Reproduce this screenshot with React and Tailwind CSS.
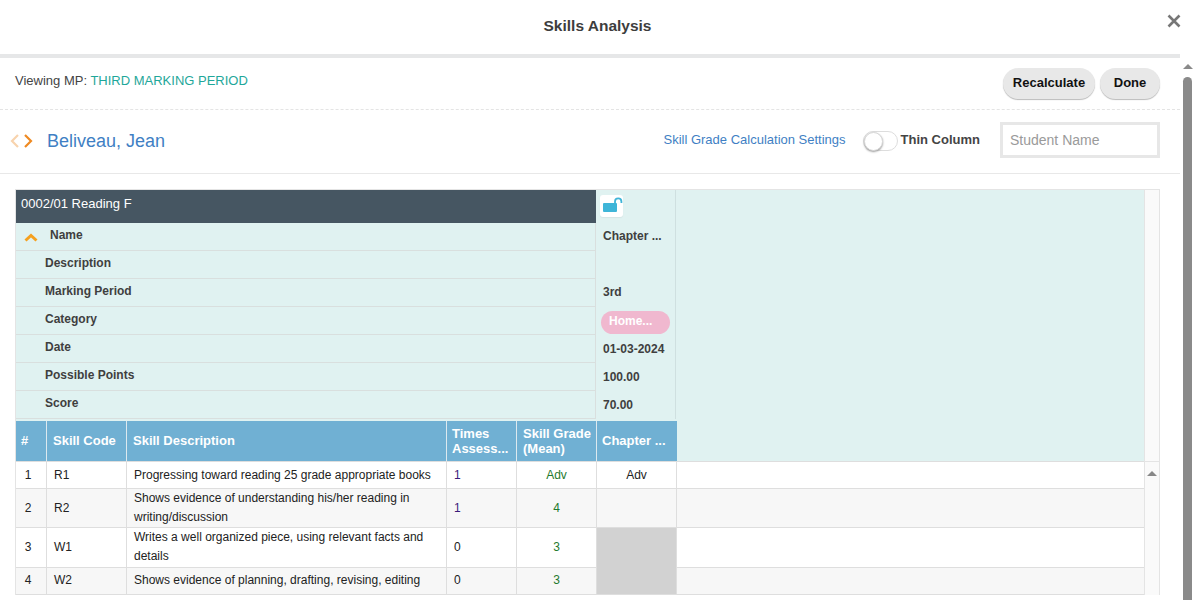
import React from 'react';

const metaRows = [
  { label: 'Name', value: 'Chapter ...', first: true, top: 'pt-[5px]' },
  { label: 'Description', value: '', top: 'pt-[5px]' },
  { label: 'Marking Period', value: '3rd', top: 'pt-[5px]' },
  { label: 'Category', pill: 'Home...', top: 'pt-[4px]' },
  { label: 'Date', value: '01-03-2024', top: 'pt-[6px]' },
  { label: 'Possible Points', value: '100.00', top: 'pt-[6px]' },
  { label: 'Score', value: '70.00', top: 'pt-[6px]' },
];

const skills = [
  { n: 1, code: 'R1', desc: 'Progressing toward reading 25 grade appropriate books', times: '1', grade: 'Adv', chapter: 'Adv', h: 'h-[27px]' },
  { n: 2, code: 'R2', desc: 'Shows evidence of understanding his/her reading in writing/discussion', times: '1', grade: '4', h: 'h-[39px]', alt: true },
  { n: 3, code: 'W1', desc: 'Writes a well organized piece, using relevant facts and details', times: '0', grade: '3', off: true, h: 'h-[40px]' },
  { n: 4, code: 'W2', desc: 'Shows evidence of planning, drafting, revising, editing', times: '0', grade: '3', off: true, h: 'h-[27px]', alt: true },
];

const gridCols = 'grid grid-cols-[31px_80px_320px_70px_80px_80px_467px]';

function Chevron({ points, color, className }) {
  return (
    <svg viewBox="0 0 12 16" className={className}>
      <polyline points={points} fill="none" stroke={color} strokeWidth="2.2" />
    </svg>
  );
}

function MetaRow({ row }) {
  return (
    <div className="h-[28px] flex">
      <div className="w-[580px] border-b border-r border-[#d9dfde] flex items-start pt-[4px] text-xs font-bold text-[#3f3f3f]">
        {row.first ? (
          <div className="flex items-center pl-[8px]">
            <svg viewBox="0 0 14 9" className="w-[14px] h-[9px] mt-[4px]">
              <polyline points="1.5,7.5 7,2.5 12.5,7.5" fill="none" stroke="#f5a01e" strokeWidth="3" />
            </svg>
            <span className="ml-[12px]">{row.label}</span>
          </div>
        ) : (
          <span className="pl-[29px]">{row.label}</span>
        )}
      </div>
      <div className={`w-[80px] border-r border-[#cfe0e0] text-xs font-bold text-[#3f3f3f] pl-[7px] ${row.top} whitespace-nowrap`}>
        {row.pill ? (
          <div className="ml-[-2px] w-[69px] h-[23px] rounded-full bg-[#f0b8cf] text-white pl-[8px] leading-[21px]">{row.pill}</div>
        ) : (
          row.value
        )}
      </div>
    </div>
  );
}

function SkillRow({ s }) {
  const bg = s.alt ? 'bg-[#f7f7f7]' : 'bg-white';
  const cell = 'border-r border-[#dedede] flex items-center';
  const lift = s.n > 2 ? 'pb-[2px]' : '';
  return (
    <div className={`${gridCols} ${s.h} ${bg} border-b border-[#dedede] text-xs text-[#222]`}>
      <div className={`${cell} ${lift} justify-center pr-[6px]`}>{s.n}</div>
      <div className={`${cell} ${lift} pl-[7px]`}>{s.code}</div>
      <div className={`${cell} ${lift} pl-[7px] pr-[8px] leading-[19px]`}>{s.desc}</div>
      <div className={`${cell} ${lift} pl-[7px] ${s.times === '1' ? 'text-[#3b1c7a]' : ''}`}>{s.times}</div>
      <div className={`${cell} ${lift} justify-center text-[#1f7a2e]`}>{s.grade}</div>
      <div className={`${cell} justify-center ${s.off ? 'bg-[#d2d2d2]' : ''}`}>{s.chapter}</div>
      <div />
    </div>
  );
}

export default function App() {
  return (
    <div className="relative w-[1195px] h-[600px] overflow-hidden bg-white font-['Liberation_Sans',Arial,sans-serif]">
      {/* Title */}
      <div className="h-[54px] flex items-center justify-center text-[15.5px] font-bold text-[#3d3d3d] pb-[3px]">Skills Analysis</div>
      <svg viewBox="0 0 14 14" className="absolute top-[14px] left-[1167px] w-[14px] h-[14px]">
        <path d="M1.5 1.5 L12.5 12.5 M12.5 1.5 L1.5 12.5" stroke="#777" strokeWidth="2.6" />
      </svg>

      <div className="flex">
        <div className="w-[1180px] border-t-4 border-[#e6e7e8]">
          {/* Marking period row */}
          <div className="h-[52px] border-b border-dashed border-[#e4e4e4] flex justify-between pl-[15px] pr-[20px]">
            <div className="text-[13px] pt-[15px] leading-[16px] text-[#444]">
              Viewing MP: <span className="text-[#1fa79a]">THIRD MARKING PERIOD</span>
            </div>
            <div className="flex gap-[5px] pt-[10px] text-[13px] font-bold text-[#111]">
              <button className="w-[92px] h-[31px] rounded-full bg-[#e8e8e8] shadow-[0_1px_1px_#bbb] pb-[2px]">Recalculate</button>
              <button className="w-[60px] h-[31px] rounded-full bg-[#e8e8e8] shadow-[0_1px_1px_#bbb] pb-[2px]">Done</button>
            </div>
          </div>

          {/* Student row */}
          <div className="h-[64px] border-b border-[#e8e8e8] flex items-center pl-[9px] pr-[20px]">
            <Chevron points="9,2 3,8 9,14" color="#f8d3ad" className="w-[12px] h-[16px] mb-[2px]" />
            <Chevron points="2,2 8,8 2,14" color="#ef8a22" className="ml-[2px] w-[12px] h-[16px] mb-[2px]" />
            <span className="ml-[12px] text-lg text-[#3f7fc4] mb-[2px]">Beliveau, Jean</span>
            <span className="ml-auto text-[13px] text-[#3f7fc4] mb-[3px]">Skill Grade Calculation Settings</span>
            <div className="ml-[17px] w-[35px] h-[20px] rounded-full border border-[#dddddd] bg-white mb-[1px]">
              <div className="w-[19px] h-[19px] rounded-full bg-white border border-[#d8d8d8] shadow-[0_1px_2px_#999]" />
            </div>
            <span className="ml-[3px] text-[13px] font-bold text-[#444] mb-[3px]">Thin Column</span>
            <input
              placeholder="Student Name"
              className="ml-[20px] w-[160px] h-[36px] border-[3px] border-[#e7e7e7] pl-[7px] text-sm outline-none placeholder:text-[#9a9a9a] mb-[3px]"
            />
          </div>

          {/* Table */}
          <div className="ml-[15px] mt-[15px] w-[1145px] border-l border-t border-[#e4e4e4] flex">
            <div className="w-[1128px]">
              <div className="bg-[#e0f2f1] border-b border-[#dedede]">
                <div className="flex h-[33px]">
                  <div className="w-[580px] bg-[#465662] text-white text-[13px] pl-[5px] pt-[4px]">0002/01 Reading F</div>
                  <div className="w-[80px] border-r border-[#cfe0e0] pl-[4px] pt-[5px]">
                    <div className="w-[23px] h-[22px] rounded-[3px] bg-white shadow-[0_1px_1px_#d5e5e5]">
                      <svg viewBox="0 0 23 22" className="w-[23px] h-[22px]">
                        <path d="M15 8 V6.5 a3.2 3.2 0 0 1 6.4 0 V8" fill="none" stroke="#3fb5d8" strokeWidth="1.8" />
                        <rect x="3" y="8" width="14" height="9" rx="1" fill="#3fb5d8" />
                      </svg>
                    </div>
                  </div>
                </div>
                {metaRows.map((row) => (
                  <MetaRow key={row.label} row={row} />
                ))}
                <div className="flex h-[42px] pt-[2px]">
                  <div className="grid grid-cols-[31px_80px_320px_70px_80px_80px] w-[661px] bg-[#70b0d3] text-white text-[13px] font-bold">
                    <div className="border-r border-[#dce9ef] flex items-center pl-[5px]">#</div>
                    <div className="border-r border-[#dce9ef] flex items-center pl-[6px]">Skill Code</div>
                    <div className="border-r border-[#dce9ef] flex items-center pl-[6px]">Skill Description</div>
                    <div className="border-r border-[#dce9ef] flex items-center pl-[5px] leading-[15px]">Times<br />Assess...</div>
                    <div className="border-r border-[#dce9ef] flex items-center pl-[6px] leading-[15px]">Skill Grade<br />(Mean)</div>
                    <div className="flex items-center pl-[5px]">Chapter ...</div>
                  </div>
                </div>
              </div>
              <div>
                {skills.map((s) => (
                  <SkillRow key={s.n} s={s} />
                ))}
              </div>
            </div>
            {/* Inner scroller */}
            <div className="w-[16px] border-l border-r border-[#e4e4e4] bg-[#fafafa] flex flex-col">
              <div className="h-[272px] border-b border-[#e4e4e4]" />
              <div className="mt-[9px] mx-auto w-0 h-0 border-x-[5px] border-x-transparent border-b-[5px] border-b-[#888]" />
            </div>
          </div>
        </div>

        {/* Page scrollbar */}
        <div className="w-[15px] flex flex-col pt-[10px] pl-[3px]">
          <div className="w-0 h-0 border-x-[5px] border-x-transparent border-b-[5px] border-b-[#8a8a8a]" />
          <div className="mt-[8px] w-[9px] h-[540px] rounded-t-full bg-[#8a8a8a]" />
        </div>
      </div>
    </div>
  );
}
